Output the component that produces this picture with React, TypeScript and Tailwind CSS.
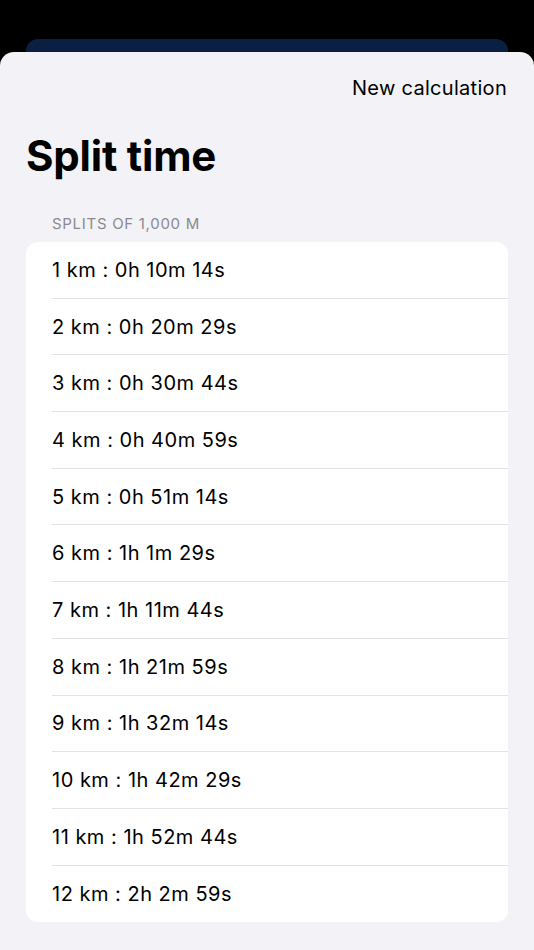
import React from 'react';

const splits = [
  '1 km : 0h 10m 14s',
  '2 km : 0h 20m 29s',
  '3 km : 0h 30m 44s',
  '4 km : 0h 40m 59s',
  '5 km : 0h 51m 14s',
  '6 km : 1h 1m 29s',
  '7 km : 1h 11m 44s',
  '8 km : 1h 21m 59s',
  '9 km : 1h 32m 14s',
  '10 km : 1h 42m 29s',
  '11 km : 1h 52m 44s',
  '12 km : 2h 2m 59s',
];

const App: React.FC = () => {
  return (
    <div className="h-[950px] w-[534px] overflow-hidden bg-black flex flex-col font-['Inter',sans-serif]">
      {/* page underneath the sheet */}
      <div className="h-[52px] shrink-0 flex flex-col justify-end px-[26px]">
        <div className="h-[13px] bg-[#0b1f42] rounded-t-[12px]" />
      </div>

      {/* sheet */}
      <div className="flex-1 bg-[#f2f2f7] rounded-t-[14px] flex flex-col">
        <div className="flex justify-end pt-[22px] pr-[27px]">
          <button className="text-[20px] leading-[28px] text-black tracking-[0.3px]">New calculation</button>
        </div>

        <h1 className="mt-[30px] px-[26px] text-[42px] leading-[48px] font-bold text-black tracking-[-0.2px]">
          Split time
        </h1>

        <div className="mt-[34px] px-[52px] text-[15px] leading-[20px] text-[#8a8a8e] uppercase tracking-[0.7px]">
          Splits of 1,000 m
        </div>

        <div className="mt-[8px] mx-[26px] bg-white rounded-[12px] overflow-hidden">
          {splits.map((s, i) => (
            <div key={s} className="pl-[26px]">
              <div
                className={`h-[56.7px] flex items-center text-[20px] text-black tracking-[0.5px] ${
                  i < splits.length - 1 ? 'border-b border-[#e3e3e6]' : ''
                }`}
              >
                {s}
              </div>
            </div>
          ))}
        </div>
      </div>
    </div>
  );
};

export default App;
